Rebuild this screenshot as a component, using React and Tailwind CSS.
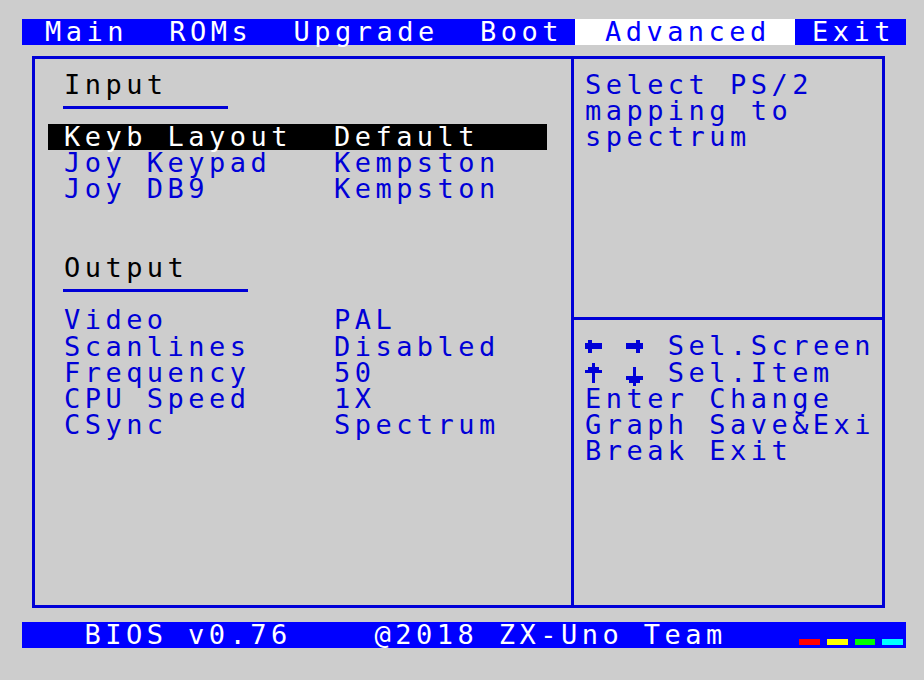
import React from 'react'

const BLUE = 'text-[#0000d7]'

const ARROWS = {
  left: [[1, 2, 1, 1], [0, 3, 5, 2], [1, 5, 1, 1]],
  right: [[3, 2, 1, 1], [0, 3, 5, 2], [3, 5, 1, 1]],
  up: [[2, 1, 1, 1], [1, 2, 3, 1], [0, 3, 5, 1], [2, 4, 1, 3]],
  down: [[2, 2, 1, 3], [0, 5, 5, 1], [1, 6, 3, 1], [2, 7, 1, 1]],
}

// pixel arrow in one 6x8 character cell
function Arrow({ dir }) {
  return (
    <svg width="20.72" height="26.2" viewBox="0 0 6 8" preserveAspectRatio="none" shapeRendering="crispEdges" className="shrink-0">
      {ARROWS[dir].map(([x, y, w, h], i) => <rect key={i} x={x} y={y} width={w} height={h} fill="#0000d7" />)}
    </svg>
  )
}

const Row = ({ children, className = '' }) => (
  <div className={`h-[26.2px] flex whitespace-pre ${className}`}>{children}</div>
)

function Setting({ label, value, active }) {
  return (
    <Row className={`w-[499px] pl-[16px] ${active ? 'bg-black text-white' : BLUE}`}>
      <span className="w-[270px]">{label}</span>
      <span>{value}</span>
    </Row>
  )
}

function Heading({ title, line }) {
  return (
    <>
      <Row className="pl-[16px] text-black">{title}</Row>
      <div className="h-[26.2px] pl-[15px] pt-[8px]">
        <div className={`h-[3px] bg-[#0000d7] ${line}`} />
      </div>
    </>
  )
}

export default function App() {
  return (
    <div className="w-[924px] h-[680px] bg-[#cdcdcd] overflow-hidden font-['DejaVu_Sans_Mono','Liberation_Mono',monospace] text-[27px] leading-[26.2px] tracking-[4.46px]">
      {/* menu bar */}
      <div className="mt-[19px] ml-[21.5px] w-[884.5px] h-[26.3px] flex whitespace-pre">
        <div className="w-[553.5px] bg-[#0000ff] text-white pl-[23.5px]">{'Main  ROMs  Upgrade  Boot'}</div>
        <div className="w-[220px] bg-white text-[#0000ff] pl-[30px]">Advanced</div>
        <div className="flex-1 bg-[#0000ff] text-white pl-[17px]">Exit</div>
      </div>

      {/* main frame */}
      <div className="mt-[10.5px] ml-[32px] w-[853px] h-[552px] border-[3px] border-[#0000d7] flex">
        <div className="w-[539px] border-r-[3px] border-[#0000d7] pt-[12.9px] pl-[13px]">
          <Heading title="Input" line="w-[165px]" />
          <Setting label="Keyb Layout" value="Default" active />
          <Setting label="Joy Keypad" value="Kempston" />
          <Setting label="Joy DB9" value="Kempston" />
          <Row />
          <Row />
          <Heading title="Output" line="w-[185px]" />
          <Setting label="Video" value="PAL" />
          <Setting label="Scanlines" value="Disabled" />
          <Setting label="Frequency" value="50" />
          <Setting label="CPU Speed" value="1X" />
          <Setting label="CSync" value="Spectrum" />
        </div>
        <div className="flex-1 flex flex-col">
          <div className={`h-[261.2px] border-b-[3px] border-[#0000d7] pt-[12.9px] pl-[11px] ${BLUE}`}>
            <Row>Select PS/2</Row>
            <Row>mapping to</Row>
            <Row>spectrum</Row>
          </div>
          <div className={`flex-1 pt-[13.5px] pl-[11px] ${BLUE}`}>
            <Row><Arrow dir="left" /><span className="w-[20.72px]" /><Arrow dir="right" /><span>{' Sel.Screen'}</span></Row>
            <Row><Arrow dir="up" /><span className="w-[20.72px]" /><Arrow dir="down" /><span>{' Sel.Item'}</span></Row>
            <Row>Enter Change</Row>
            <Row>Graph Save&amp;Exi</Row>
            <Row>Break Exit</Row>
          </div>
        </div>
      </div>

      {/* status bar */}
      <div className="mt-[14px] ml-[21.5px] w-[884.5px] h-[26.3px] bg-[#0000ff] text-white flex items-start whitespace-pre">
        <span className="pl-[63px]">{'BIOS v0.76    @2018 ZX-Uno Team'}</span>
        <div className="ml-auto mt-[17px] pr-[3px] flex gap-[7px]">
          <div className="w-[20.7px] h-[6px] bg-[#ff0000]" />
          <div className="w-[20.7px] h-[6px] bg-[#ffff00]" />
          <div className="w-[20.7px] h-[6px] bg-[#00ff00]" />
          <div className="w-[20.7px] h-[6px] bg-[#00ffff]" />
        </div>
      </div>
    </div>
  )
}
